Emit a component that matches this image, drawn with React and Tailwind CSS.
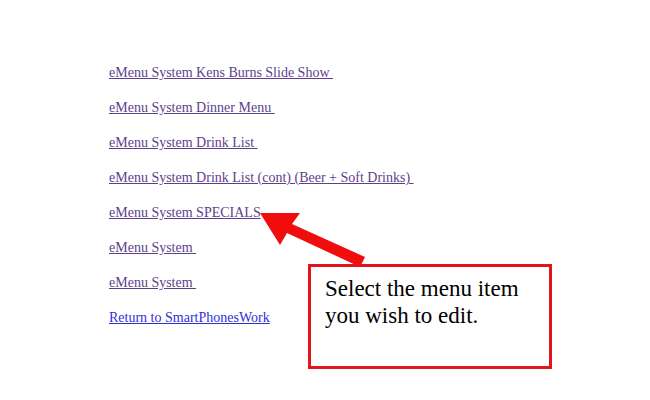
const links = [
  'eMenu System Kens Burns Slide Show ',
  'eMenu System Dinner Menu ',
  'eMenu System Drink List ',
  'eMenu System Drink List (cont) (Beer + Soft Drinks) ',
  'eMenu System SPECIALS',
  'eMenu System ',
  'eMenu System ',
]

export default function App() {
  return (
    <div className="relative w-[650px] h-[400px] bg-white overflow-hidden font-['Liberation_Serif',serif]">
      <div className="pt-[64px] pl-[109px] flex flex-col gap-[17px] text-[14px] leading-[18px]">
        {links.map((label, i) => (
          <div key={i}>
            <a href="#" className="text-[#5e3f8c] underline whitespace-pre">{label}</a>
          </div>
        ))}
        <div>
          <a href="#" className="text-[#2f2fd6] underline">Return to SmartPhonesWork</a>
        </div>
      </div>

      <svg className="absolute left-0 top-0" width="650" height="400">
        <polygon points="260,213 300,213 292,224 365,257 360,267 287,233 280,245" fill="#f20d0d" />
      </svg>

      <div className="absolute left-[308px] top-[264px] w-[244px] h-[105px] border-[3px] border-[#e0161b] bg-white pl-[14px] pt-[8px]">
        <p className="text-[23px] leading-[27px] text-black">Select the menu item<br />you wish to edit.</p>
      </div>
    </div>
  )
}
